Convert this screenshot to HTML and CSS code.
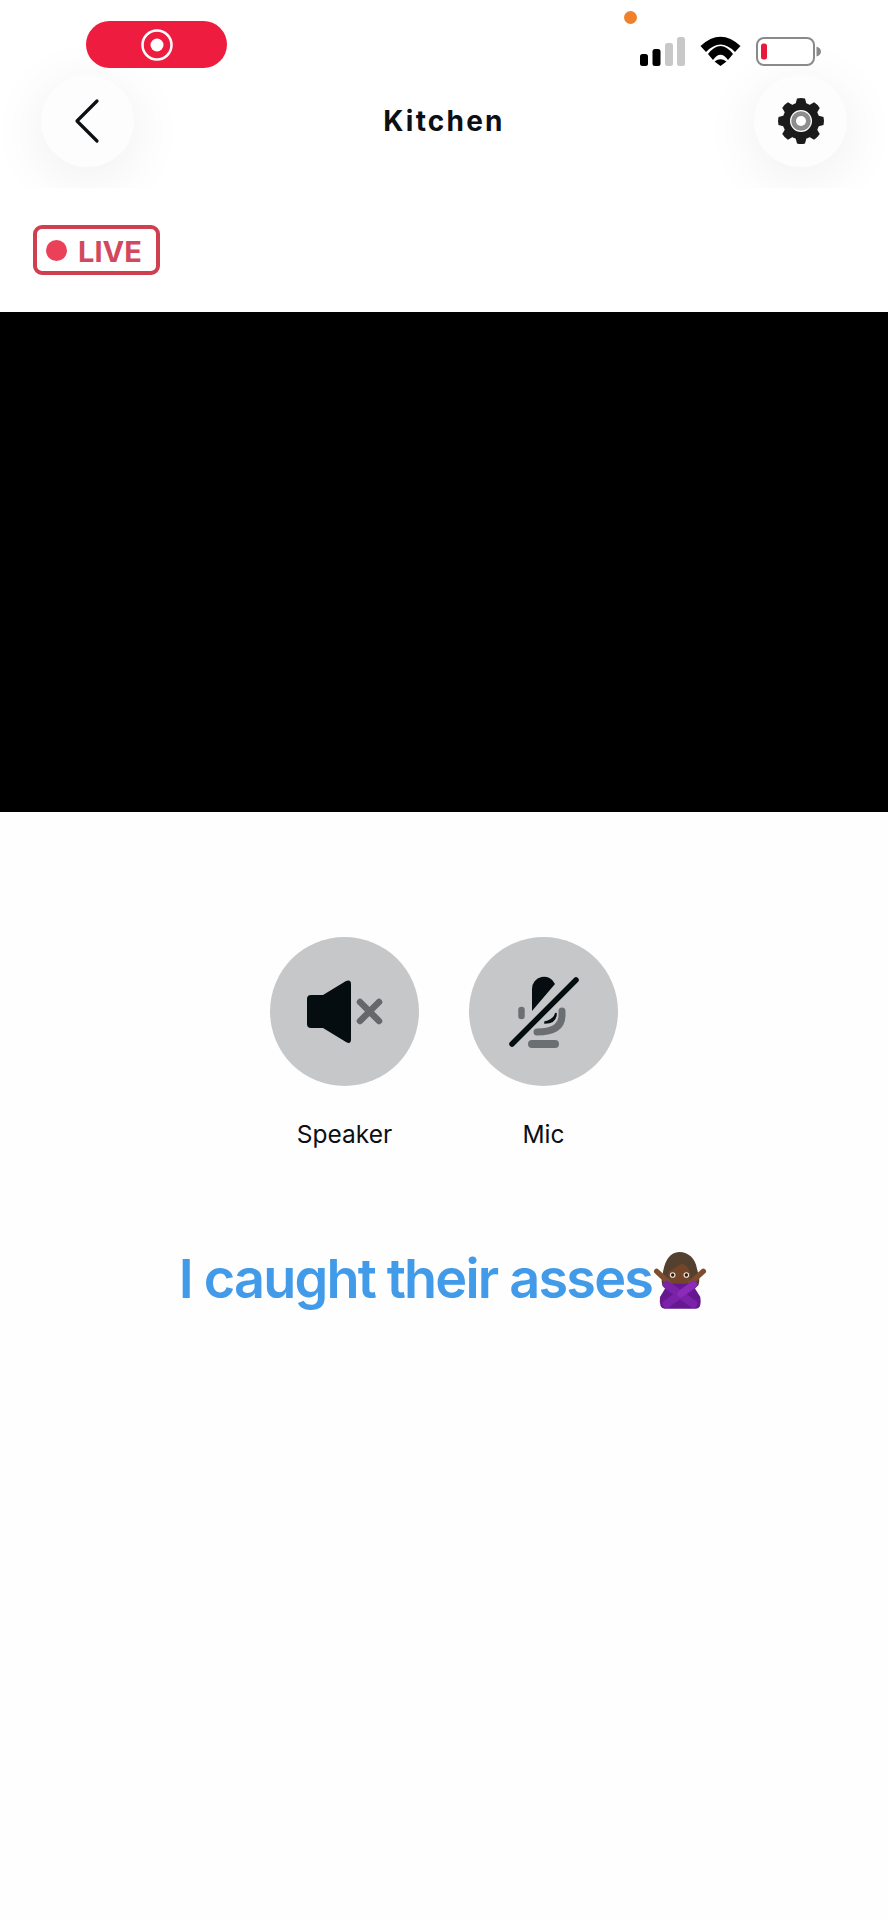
FILE: index.html
```html
<!DOCTYPE html>
<html>
<head>
    <title>Kitchen</title>
    <link rel="stylesheet" href="styles.css">
</head>
<body>
    <header class="top-bar">
        <div class="status-row">
            <div class="record-pill">
                <svg width="36" height="36" viewBox="0 0 36 36">
                    <circle cx="18" cy="18" r="14.500" fill="none" stroke="#fff" stroke-width="2.500"/>
                    <circle cx="18" cy="18" r="6.500" fill="#fff"/>
                </svg>
            </div>
            <span class="camera-dot"></span>
            <div class="status-icons">
                <svg width="45" height="29" viewBox="0 0 45 29">
                    <rect x="0" y="17" width="8" height="12" rx="2.500" fill="#000"/>
                    <rect x="12.500" y="12" width="8" height="17" rx="2.500" fill="#000"/>
                    <rect x="25" y="6" width="8" height="23" rx="2.500" fill="#c8c8c8"/>
                    <rect x="37" y="0" width="8" height="29" rx="2.500" fill="#c8c8c8"/>
                </svg>
                <svg width="39" height="29" viewBox="0 0 39 29">
                    <path d="M-0.500 9 Q19.500 -9.500 39.500 9 L34 15 Q19.500 0 5 15 Z" fill="#000"/>
                    <path d="M7 17 Q19.500 1 32 17 L27 23 Q19.500 12.500 12 23 Z" fill="#000"/>
                    <path d="M13.500 24.500 Q19.500 20 25.500 24.500 L19.500 29 Z" fill="#000"/>
                </svg>
                <svg width="65" height="29" viewBox="0 0 65 29">
                    <rect x="1" y="1" width="57" height="27" rx="7" fill="#fff" stroke="#8a8a8a" stroke-width="2"/>
                    <rect x="5" y="6.500" width="6" height="16" rx="2.500" fill="#e9193c"/>
                    <path d="M60.500 9.500 Q65 11 65 14.500 Q65 18 60.500 19.500 Z" fill="#8a8a8a"/>
                </svg>
            </div>
        </div>
        <div class="nav-row">
            <button class="round-btn">
                <svg width="28" height="46" viewBox="0 0 28 46">
                    <path d="M23 3 L3 23 L23 43" fill="none" stroke="#0c1014" stroke-width="3.200" stroke-linecap="round" stroke-linejoin="round"/>
                </svg>
            </button>
            <h1 class="title">Kitchen</h1>
            <button class="round-btn">
                <svg width="48" height="48" viewBox="0 0 48 48">
                    <g fill="#1b1b1b">
                        <circle cx="24" cy="24" r="18.500"/>
                        <path d="M18 9 L20 1.500 Q24 0.500 28 1.500 L30 9 Z"/>
                        <path d="M18 9 L20 1.500 Q24 0.500 28 1.500 L30 9 Z" transform="rotate(45 24 24)"/>
                        <path d="M18 9 L20 1.500 Q24 0.500 28 1.500 L30 9 Z" transform="rotate(90 24 24)"/>
                        <path d="M18 9 L20 1.500 Q24 0.500 28 1.500 L30 9 Z" transform="rotate(135 24 24)"/>
                        <path d="M18 9 L20 1.500 Q24 0.500 28 1.500 L30 9 Z" transform="rotate(180 24 24)"/>
                        <path d="M18 9 L20 1.500 Q24 0.500 28 1.500 L30 9 Z" transform="rotate(225 24 24)"/>
                        <path d="M18 9 L20 1.500 Q24 0.500 28 1.500 L30 9 Z" transform="rotate(270 24 24)"/>
                        <path d="M18 9 L20 1.500 Q24 0.500 28 1.500 L30 9 Z" transform="rotate(315 24 24)"/>
                    </g>
                    <circle cx="24" cy="24" r="11" fill="#fff"/>
                    <circle cx="24" cy="24" r="9.800" fill="#8d8d8d"/>
                    <circle cx="24" cy="24" r="5" fill="#fff"/>
                </svg>
            </button>
        </div>
    </header>

    <div class="live-row">
        <div class="live-badge">
            <span class="live-dot"></span>
            <span class="live-text">LIVE</span>
        </div>
    </div>

    <div class="video"></div>

    <div class="controls">
        <div class="control">
            <div class="control-circle">
                <svg width="149" height="149" viewBox="0 0 149 149">
                    <path d="M41 58 H53 L76 44 Q81 42 81 47 V102 Q81 108 76 105 L53 91 H41 Q37 91 37 87 V62 Q37 58 41 58 Z" fill="#060d10"/>
                    <path d="M90 65 L109 84 M109 65 L90 84" fill="none" stroke="#65686b" stroke-width="6.500" stroke-linecap="round"/>
                </svg>
            </div>
            <span class="control-label">Speaker</span>
        </div>
        <div class="control">
            <div class="control-circle">
                <svg width="149" height="149" viewBox="0 0 149 149">
                    <path d="M63 74 V52 A12 12 0 0 1 86 47 Z" fill="#060d10"/>
                    <path d="M76 85 Q85 83 87 76 L87 78 Q86 86 76 86 Z" fill="#060d10" stroke="#060d10" stroke-width="1.500"/>
                    <path d="M52.500 73 V79" fill="none" stroke="#6c6f72" stroke-width="6.500" stroke-linecap="round"/>
                    <path d="M93 74 V78 Q93 95 68 95" fill="none" stroke="#6c6f72" stroke-width="7" stroke-linecap="round"/>
                    <rect x="59" y="103" width="31" height="8" rx="4" fill="#6c6f72"/>
                    <path d="M43 107 L107 43" fill="none" stroke="#060d10" stroke-width="5.500" stroke-linecap="round"/>
                </svg>
            </div>
            <span class="control-label">Mic</span>
        </div>
    </div>

    <div class="message">
        <span class="message-text">I caught their asses</span>
        <svg class="message-emoji" width="57" height="57" viewBox="18 30 171 171">
            <path d="M100 30 C72 30 58 55 52 85 C48 108 44 118 50 132 L156 132 C164 114 158 100 153 80 C148 50 128 30 100 30 Z" fill="#54402f"/>
            <ellipse cx="100" cy="100" rx="33" ry="36" fill="#734529"/>
            <path d="M68 88 Q90 76 112 62 Q128 76 133 90 Q135 60 100 50 Q68 54 68 88 Z" fill="#54402f"/>
            <circle cx="80" cy="99" r="8.500" fill="#efe6da"/>
            <circle cx="121" cy="99" r="8.500" fill="#efe6da"/>
            <circle cx="80" cy="99" r="5" fill="#2a1a12"/>
            <circle cx="121" cy="99" r="5" fill="#2a1a12"/>
            <path d="M32 88 L68 122 M172 88 L134 122" fill="none" stroke="#7e4d2d" stroke-width="16" stroke-linecap="round"/>
            <path d="M42 165 L66 125 L138 125 L163 165 Q168 200 150 200 L56 200 Q38 200 42 165 Z" fill="#65188f"/>
            <path d="M62 128 L142 186 M142 128 L62 186" fill="none" stroke="#7b22a8" stroke-width="24" stroke-linecap="round"/>
            <path d="M142 128 L104 156" fill="none" stroke="#8a2cb8" stroke-width="20" stroke-linecap="round"/>
        </svg>
    </div>
</body>
</html>
```

FILE: styles.css
```css
body {
    margin: 0;
    width: 888px;
    height: 1920px;
    overflow: hidden;
    background-color: #fefefe;
    font-family: Inter, "Liberation Sans", sans-serif;
}
.top-bar {
    position: relative;
    height: 188px;
    overflow: hidden;
    background: white;
}
.status-row {
    position: relative;
    z-index: 1;
    display: flex;
    justify-content: space-between;
    align-items: flex-start;
    height: 75px;
    padding: 21px 67px 0 86px;
    box-sizing: border-box;
}
.record-pill {
    display: flex;
    align-items: center;
    justify-content: center;
    width: 141px;
    height: 47px;
    background-color: #ee1c3e;
    border-radius: 24px;
}
.camera-dot {
    position: absolute;
    left: 624px;
    top: 11px;
    width: 13px;
    height: 13px;
    background-color: #f0812a;
    border-radius: 50%;
}
.status-icons {
    display: flex;
    gap: 16px;
    margin-top: 16px;
}
.status-icons svg {
    display: block;
    overflow: visible;
}
.nav-row {
    display: flex;
    justify-content: space-between;
    align-items: center;
    padding: 0 41px;
}
.round-btn {
    display: flex;
    align-items: center;
    justify-content: center;
    width: 93px;
    height: 92px;
    padding: 0;
    border: none;
    border-radius: 50%;
    background: #fdfdfd;
    box-shadow: 0 10px 50px 8px rgba(0,0,0,0.05);
}
.title {
    margin: 0;
    font-size: 28px;
    font-weight: 700;
    letter-spacing: 2.2px;
    color: #0c1014;
}
.live-row {
    display: flex;
    align-items: center;
    height: 124px;
    padding-left: 33px;
    background: white;
}
.live-badge {
    display: flex;
    align-items: center;
    gap: 11px;
    width: 127px;
    height: 50px;
    padding-left: 9px;
    box-sizing: border-box;
    border: 4px solid #cf3f50;
    border-radius: 9px;
}
.live-dot {
    width: 21px;
    height: 21px;
    background-color: #ea4158;
    border-radius: 50%;
}
.live-text {
    margin-top: 2px;
    font-size: 29px;
    font-weight: 700;
    color: #d2485c;
}
.video {
    height: 500px;
    background-color: black;
}
.controls {
    display: flex;
    justify-content: center;
    gap: 50px;
    padding-top: 125px;
}
.control {
    display: flex;
    flex-direction: column;
    align-items: center;
    width: 149px;
}
.control-circle {
    width: 149px;
    height: 149px;
    background-color: #c6c7c9;
    border-radius: 50%;
}
.control-circle svg {
    display: block;
}
.control-label {
    margin-top: 33px;
    font-size: 24.500px;
    line-height: 30px;
    color: #0c1014;
}
.message {
    display: flex;
    justify-content: center;
    align-items: center;
    margin-top: 97px;
}
.message-text {
    font-size: 54px;
    font-weight: 600;
    letter-spacing: -1.800px;
    line-height: 66px;
    color: #429be8;
}
.message-emoji {
    margin-top: 2px;
}
```
